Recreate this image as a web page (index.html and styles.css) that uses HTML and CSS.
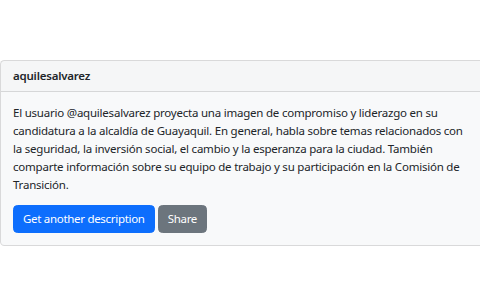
FILE: index.html
```html
<!DOCTYPE html>
<html lang="es">
<head>
    <meta charset="UTF-8">
    <meta name="viewport" content="width=device-width, initial-scale=1.0">
    <title>Descripción de usuario</title>
    <link rel="stylesheet" href="styles.css">
</head>
<body>

    <div class="page">
        <div class="card">
            <div class="card-header">aquilesalvarez</div>
            <div class="card-body">
                <p class="card-text">El usuario @aquilesalvarez proyecta una imagen de compromiso y liderazgo en su candidatura a la alcaldía de Guayaquil. En general, habla sobre temas relacionados con la seguridad, la inversión social, el cambio y la esperanza para la ciudad. También comparte información sobre su equipo de trabajo y su participación en la Comisión de Transición.</p>
                <div class="actions">
                    <button class="btn btn-primary">Get another description</button>
                    <button class="btn btn-secondary">Share</button>
                </div>
            </div>
        </div>
    </div>

</body>
</html>
```

FILE: styles.css
```css
body {
    margin: 0;
    background: #fff;
    color: #212529;
    font-family: "Noto Sans", "Open Sans", sans-serif;
    font-size: 11.5px;
    line-height: 18px;
    letter-spacing: -0.22px;
    overflow: hidden;
}
.page {
    padding: 60px 0 0 0;
    width: 520px;
}
.card {
    width: 482px;
    background: #f8f9fa;
    border: 1px solid rgba(0, 0, 0, 0.125);
    border-radius: 4.5px;
}
.card-header {
    padding: 6px 12px;
    font-weight: 600;
    border-bottom: 1px solid rgba(0, 0, 0, 0.125);
    background: rgba(0, 0, 0, 0.01);
}
.card-body {
    padding: 12px;
}
.card-text {
    margin: 0 0 11px;
}
.actions {
    display: flex;
    gap: 3px;
}
.btn {
    font-family: inherit;
    font-size: 11.5px;
    line-height: 18px;
    letter-spacing: -0.3px;
    padding: 4px 9px;
    border: 1px solid transparent;
    border-radius: 4.5px;
    color: #fff;
    cursor: pointer;
}
.btn-primary {
    background: #0d6efd;
    border-color: #0d6efd;
}
.btn-secondary {
    background: #6c757d;
    border-color: #6c757d;
}
```
